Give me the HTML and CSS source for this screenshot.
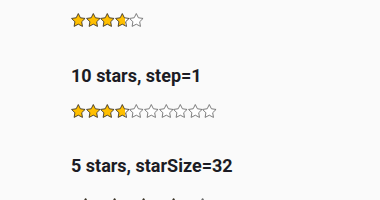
FILE: index.html
```html
<!DOCTYPE html>
<html>
<head>
    <title>Star Rating Demo</title>
    <link rel="stylesheet" href="styles.css">
</head>
<body>
    <div class="page">
        <div class="demo first">
            <div class="stars" data-count="5" data-value="3.7" data-size="16"></div>
        </div>
        <div class="demo">
            <h3>10 stars, step=1</h3>
            <div class="stars" data-count="10" data-value="3.7" data-size="16"></div>
        </div>
        <div class="demo">
            <h3>5 stars, starSize=32</h3>
            <div class="stars big" data-count="5" data-value="3.7" data-size="32"></div>
        </div>
    </div>

    <script>
        const starPath = "M12 2l3.09 6.26L22 9.27l-5 4.87 1.18 6.88L12 17.77l-6.18 3.25L7 14.14 2 9.27l6.91-1.01L12 2z";
        let gradId = 0;

        document.querySelectorAll(".stars").forEach(function (box) {
            const count = parseInt(box.dataset.count);
            const value = parseFloat(box.dataset.value);
            const size = parseFloat(box.dataset.size) * 0.9125;

            for (let i = 0; i < count; i++) {
                const fill = Math.max(0, Math.min(1, value - i));
                let paint = "#fff";
                let defs = "";
                if (fill >= 1) {
                    paint = "#ffbf00";
                } else if (fill > 0) {
                    gradId++;
                    const pct = Math.round(fill * 100);
                    defs = '<defs><linearGradient id="g' + gradId + '">' +
                        '<stop offset="' + pct + '%" stop-color="#ffbf00"/>' +
                        '<stop offset="' + pct + '%" stop-color="#fff"/>' +
                        '</linearGradient></defs>';
                    paint = "url(#g" + gradId + ")";
                }
                const stroke = fill > 0 ? "#3a3226" : "#6b6b6b";
                box.innerHTML += '<svg class="star" width="' + size + '" height="' + size +
                    '" viewBox="1.2 1.2 21.6 21.6">' + defs +
                    '<path d="' + starPath + '" fill="' + paint + '" stroke="' + stroke +
                    '" stroke-width="1.3" stroke-linejoin="round"/></svg>';
            }
        });
    </script>
</body>
</html>
```

FILE: styles.css
```css
body {
    font-family: Roboto, "Liberation Sans", sans-serif;
    background-color: #fafafa;
    margin: 0;
    padding: 0;
}

.page {
    padding: 0 0 0 71px;
}

.demo {
    margin-bottom: 36px;
}

.demo.first {
    padding-top: 13px;
}

h3 {
    margin: 0;
    font-size: 18px;
    font-weight: 700;
    line-height: 24px;
    color: #1c1c24;
}

.stars {
    display: flex;
    margin-top: 16px;
}

.stars.big {
    margin-top: 20px;
}

.first .stars {
    margin-top: 0;
}

.star {
    display: block;
    flex: none;
}
```
